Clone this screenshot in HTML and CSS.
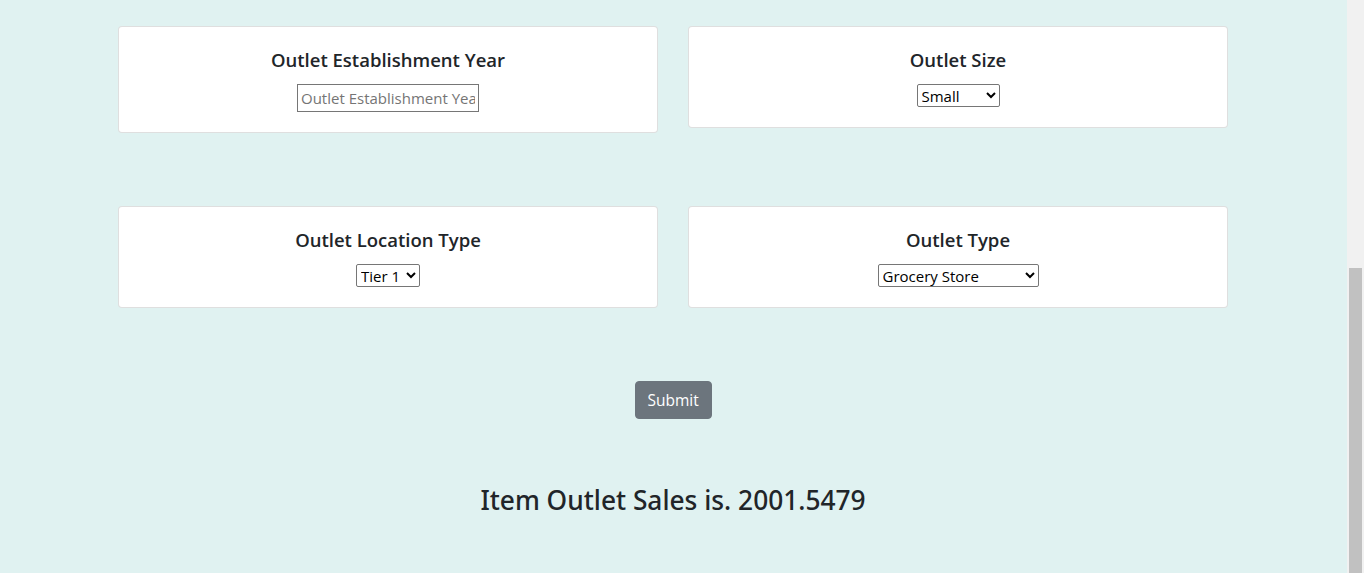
FILE: index.html
```html
<!DOCTYPE html>
<html lang="en">
<head>
<meta charset="utf-8">
<title>Item Outlet Sales</title>
<link rel="stylesheet" href="styles.css">
</head>
<body>
<div class="page">
  <main class="viewport">
    <div class="container">
      <div class="row">
        <div class="card">
          <h5 class="card-title">Outlet Establishment Year</h5>
          <input class="field input-year" type="text" placeholder="Outlet Establishment Year">
        </div>
        <div class="card">
          <h5 class="card-title">Outlet Size</h5>
          <select class="field select-size">
            <option>Small</option>
            <option>Medium</option>
            <option>High</option>
          </select>
        </div>
      </div>
      <div class="row">
        <div class="card">
          <h5 class="card-title">Outlet Location Type</h5>
          <select class="field select-tier">
            <option>Tier 1</option>
            <option>Tier 2</option>
            <option>Tier 3</option>
          </select>
        </div>
        <div class="card">
          <h5 class="card-title">Outlet Type</h5>
          <select class="field select-type">
            <option>Grocery Store</option>
            <option>Supermarket Type1</option>
            <option>Supermarket Type2</option>
            <option>Supermarket Type3</option>
          </select>
        </div>
      </div>
      <div class="actions">
        <button class="btn" type="button">Submit</button>
      </div>
      <h3 class="result">Item Outlet Sales is. 2001.5479</h3>
    </div>
  </main>
  <div class="scrollbar"><div class="thumb"></div></div>
</div>
</body>
</html>
```
FILE: styles.css
```css
* { box-sizing: border-box; }

html, body {
  margin: 0;
  padding: 0;
}

body {
  font-family: "Open Sans", "Noto Sans", sans-serif;
  color: #212529;
  background: #e0f2f1;
  font-size: 16px;
}

.page {
  display: flex;
  height: 573px;
  overflow: hidden;
}

.viewport {
  flex: 1;
  padding-right: 1px;
  background: #e0f2f1;
}

.container {
  width: 1110px;
  margin: 0 auto;
  padding-top: 26px;
}

.row {
  display: grid;
  grid-template-columns: 1fr 1fr;
  column-gap: 30px;
  align-items: start;
  margin-bottom: 73px;
}

.card {
  background: #fff;
  border: 1px solid rgba(0, 0, 0, 0.125);
  border-radius: 4px;
  padding: 20px;
  text-align: center;
}

.card-title {
  margin: 0 0 11px;
  font-size: 18.5px;
  line-height: 26px;
  font-weight: 600;
  color: #212529;
}

.field {
  font-family: inherit;
  font-size: 15px;
  color: #000;
  background: #fff;
  border: 1px solid #767676;
  vertical-align: top;
}

.input-year {
  width: 182px;
  height: 28px;
  padding: 1px 3px;
  border-radius: 0;
}

.input-year::placeholder {
  color: #757575;
}

.select-size,
.select-tier,
.select-type {
  height: 23px;
  padding: 0;
  border-radius: 2px;
}

.select-size { width: 83px; }
.select-tier { width: 64px; }
.select-type { width: 161px; }

.actions {
  display: flex;
  justify-content: center;
}

.btn {
  font-family: inherit;
  font-size: 15.5px;
  line-height: 24px;
  padding: 6px 12px;
  width: 77px;
  color: #fff;
  background: #6c757d;
  border: 1px solid #6c757d;
  border-radius: 4px;
}

.result {
  margin: 64px 0 0;
  text-align: center;
  font-family: "Noto Sans", "Open Sans", sans-serif;
  font-size: 26.3px;
  line-height: 34px;
  font-weight: 500;
  color: #212529;
}

.scrollbar {
  width: 17px;
  background: #f1f1f1;
  display: flex;
  flex-direction: column;
  justify-content: flex-end;
  padding: 0 2px;
}

.thumb {
  height: 305px;
  background: #c1c1c1;
}
```
